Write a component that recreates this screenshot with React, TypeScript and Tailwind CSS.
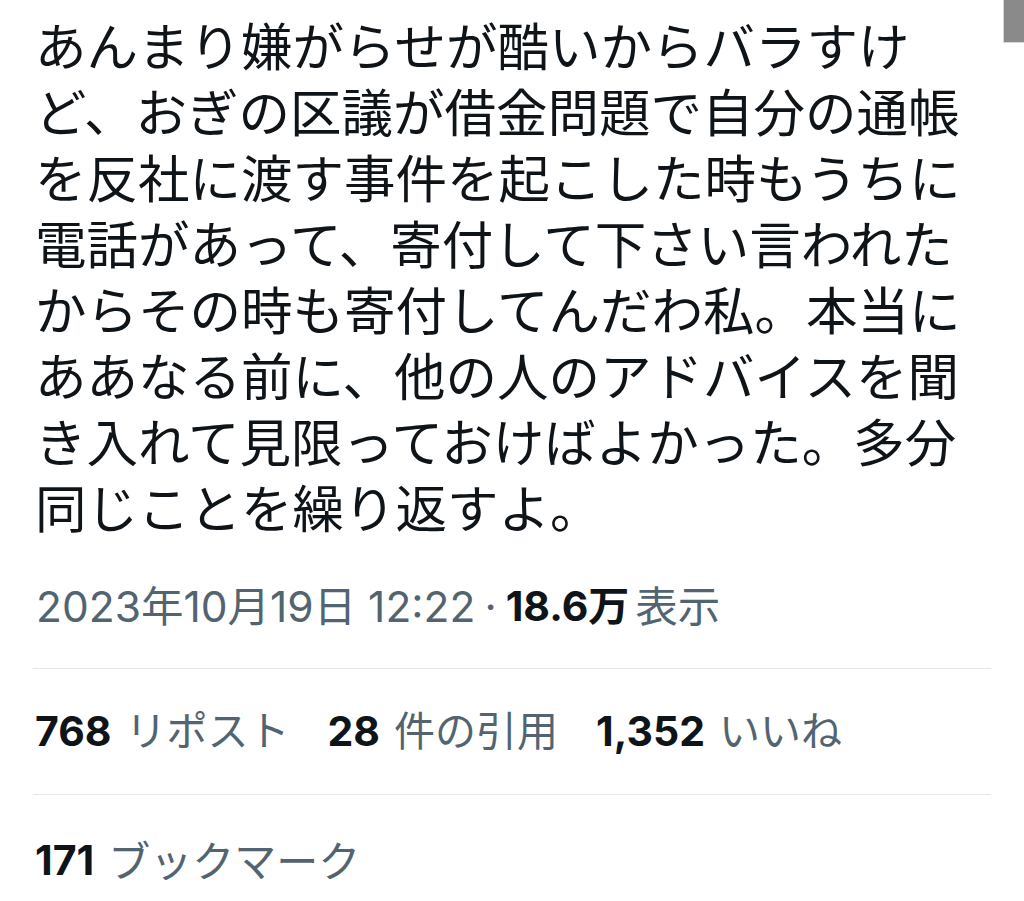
import React from "react";

const lines = [
  "あんまり嫌がらせが酷いからバラすけ",
  "ど、おぎの区議が借金問題で自分の通帳",
  "を反社に渡す事件を起こした時もうちに",
  "電話があって、寄付して下さい言われた",
  "からその時も寄付してんだわ私。本当に",
  "ああなる前に、他の人のアドバイスを聞",
  "き入れて見限っておけばよかった。多分",
  "同じことを繰り返すよ。",
];

const font = { fontFamily: '"Inter", "Noto Sans CJK JP", sans-serif' };

export default function App() {
  return (
    <div
      className="relative h-[901px] w-[1024px] overflow-hidden bg-white text-[#0f1419]"
      style={font}
    >
      <div className="absolute right-0 top-0 h-[43px] w-[21px] border-l border-b border-[#d6d6d6] bg-[#8a8a8a]" />
      <div className="px-[33px]">
        <div
          className="pl-[2px] pt-[11px] text-[51.5px] leading-[66px] tracking-[0px]"
          style={{ fontFamily: '"Noto Sans CJK JP", sans-serif' }}
        >
          {lines.map((l, i) => (
            <div key={i} className="whitespace-nowrap">
              {l}
            </div>
          ))}
        </div>
        <div className="mt-[38px] flex h-[60px] items-center whitespace-nowrap pl-[3px] text-[42.5px] text-[#536471]">
          <span>2023年10月19日 12:22</span>
          <span className="px-[9px]">·</span>
          <span className="font-bold text-[#0f1419] text-[41px]">18.6万</span>
          <span className="ml-[6px]">表示</span>
        </div>
        <div className="mt-[31px] border-t border-[#e4e7e9]" />
        <div className="flex h-[125px] items-center gap-[38px] whitespace-nowrap pl-[2px] text-[41px]">
          <div className="flex items-center gap-[14px]">
            <span className="font-bold">768</span>
            <span className="text-[#536471]">リポスト</span>
          </div>
          <div className="flex items-center gap-[14px]">
            <span className="font-bold">28</span>
            <span className="text-[#536471]">件の引用</span>
          </div>
          <div className="flex items-center gap-[14px]">
            <span className="font-bold">1,352</span>
            <span className="text-[#536471]">いいね</span>
          </div>
        </div>
        <div className="border-t border-[#e4e7e9]" />
        <div className="flex h-[132px] items-center gap-[14px] whitespace-nowrap pl-[2px] text-[41px]">
          <span className="font-bold">171</span>
          <span className="text-[#536471] text-[42px]">ブックマーク</span>
        </div>
      </div>
    </div>
  );
}
